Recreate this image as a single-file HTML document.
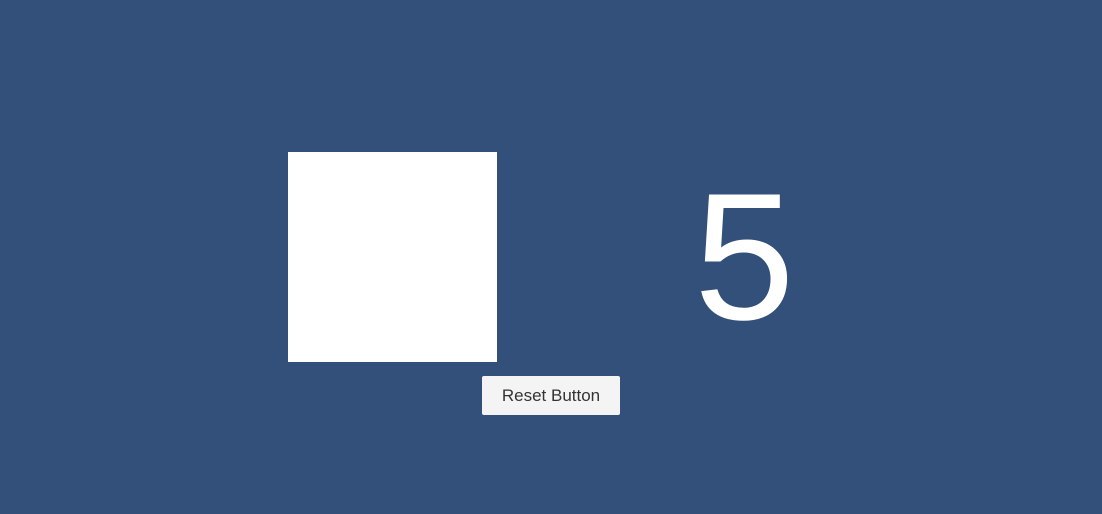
<!DOCTYPE html>
<html><head><style>
html,body{margin:0;padding:0;width:1102px;height:514px;background:#32507a;overflow:hidden;font-family:"Liberation Sans",sans-serif}
.sq{position:absolute;left:288px;top:152px;width:209px;height:210px;background:#fff}
.btn{position:absolute;left:482px;top:376px;width:138px;height:39px;background:#f4f4f4;border-radius:2px;color:#333;font-size:17px;line-height:40px;text-align:center}
.num{position:absolute;left:694px;top:167px;color:#fff;font-size:181px;line-height:181px}
</style></head><body>
<div class="sq"></div>
<div class="num">5</div>
<div class="btn">Reset Button</div>
</body></html>
